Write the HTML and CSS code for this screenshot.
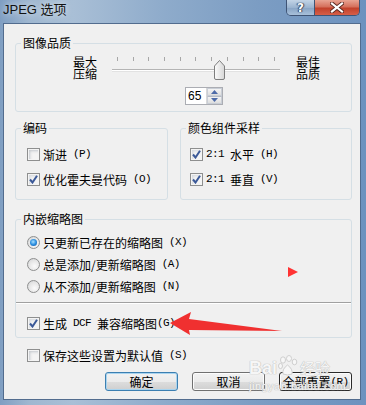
FILE: index.html
```html
<!DOCTYPE html>
<html lang="zh-CN">
<head>
  <meta charset="UTF-8">
  <title>JPEG 选项</title>
  <link rel="stylesheet" href="styles.css">
</head>
<body>
  <div class="window">

    <!-- title bar -->
    <div class="titlebar">
      <span class="title">JPEG 选项</span>
      <div class="caption-buttons">
        <span class="cap-btn help">?</span>
        <span class="cap-btn close">
          <svg width="14" height="11" viewBox="0 0 14 11">
            <path d="M2 1.5 L12 9.5 M12 1.5 L2 9.5" stroke="#5a2a22" stroke-width="4" stroke-linecap="square"/>
            <path d="M2 1.5 L12 9.5 M12 1.5 L2 9.5" stroke="#fff" stroke-width="2.2" stroke-linecap="square"/>
          </svg>
        </span>
      </div>
    </div>

    <div class="client">

      <!-- image quality -->
      <fieldset class="group quality">
        <legend>图像品质</legend>
        <div class="quality-row">
          <div class="end-label"><span>最大</span><span>压缩</span></div>
          <div class="slider">
            <div class="ticks">
              <i></i><i></i><i></i><i></i><i></i><i></i><i></i><i></i><i></i><i></i><i></i>
            </div>
            <div class="track"></div>
            <svg class="thumb" style="left: 102px" width="11" height="20" viewBox="0 0 11 20">
              <defs>
                <linearGradient id="thumbFill" x1="0" y1="0" x2="1" y2="0">
                  <stop offset="0" stop-color="#fbfbfb"/>
                  <stop offset="1" stop-color="#d6d6d6"/>
                </linearGradient>
              </defs>
              <path d="M0.5 6 L5.5 0.5 L10.5 6 V18 Q10.5 19.5 9 19.5 H2 Q0.5 19.5 0.5 18 Z" fill="url(#thumbFill)" stroke="#7d7d7d"/>
            </svg>
          </div>
          <div class="end-label"><span>最佳</span><span>品质</span></div>
        </div>
        <div class="spin-row">
          <div class="spinner">
            <span class="spin-value">65</span>
            <span class="spin-buttons">
              <span class="spin-btn"><svg width="7" height="4"><path d="M0 4 L3.5 0 L7 4 Z" fill="#4e6ba8"/></svg></span>
              <span class="spin-btn"><svg width="7" height="4"><path d="M0 0 L3.5 4 L7 0 Z" fill="#4e6ba8"/></svg></span>
            </span>
          </div>
        </div>
      </fieldset>

      <div class="mid-row">
        <!-- encoding -->
        <fieldset class="group encoding">
          <legend>编码</legend>
          <div class="options">
            <label class="option"><span class="check"></span>渐进<span class="lat"> (P)</span></label>
            <label class="option"><span class="check checked"><svg width="9" height="9" viewBox="0 0 9 9"><path d="M1 4.5 L3.5 7.5 L8 0.8" fill="none" stroke="#3b5998" stroke-width="2"/></svg></span>优化霍夫曼代码<span class="lat"> (O)</span></label>
          </div>
        </fieldset>

        <!-- colour sampling -->
        <fieldset class="group sampling">
          <legend>颜色组件采样</legend>
          <div class="options">
            <label class="option"><span class="check checked"><svg width="9" height="9" viewBox="0 0 9 9"><path d="M1 4.5 L3.5 7.5 L8 0.8" fill="none" stroke="#3b5998" stroke-width="2"/></svg></span><span class="lat">2:1 </span>水平<span class="lat"> (H)</span></label>
            <label class="option"><span class="check checked"><svg width="9" height="9" viewBox="0 0 9 9"><path d="M1 4.5 L3.5 7.5 L8 0.8" fill="none" stroke="#3b5998" stroke-width="2"/></svg></span><span class="lat">2:1 </span>垂直<span class="lat"> (V)</span></label>
          </div>
        </fieldset>
      </div>

      <!-- thumbnails -->
      <fieldset class="group thumbs">
        <legend>内嵌缩略图</legend>
        <div class="radios">
          <label class="option"><span class="radio selected"><i></i></span>只更新已存在的缩略图<span class="lat"> (X)</span></label>
          <label class="option"><span class="radio"></span>总是添加/更新缩略图<span class="lat"> (A)</span></label>
          <label class="option"><span class="radio"></span>从不添加/更新缩略图<span class="lat"> (N)</span></label>
        </div>
        <div class="separator"></div>
        <label class="option dcf"><span class="check checked"><svg width="9" height="9" viewBox="0 0 9 9"><path d="M1 4.5 L3.5 7.5 L8 0.8" fill="none" stroke="#3b5998" stroke-width="2"/></svg></span>生成<span class="lat"> DCF </span>兼容缩略图<span class="lat">(G)</span></label>
      </fieldset>

      <label class="option save"><span class="check"></span>保存这些设置为默认值<span class="lat"> (S)</span></label>

      <div class="buttons">
        <span class="btn default">确定</span>
        <span class="btn">取消</span>
        <span class="btn focused">全部重置<span class="lat">(R)</span></span>
      </div>
    </div>

    <!-- watermark -->
    <div class="watermark">
      <div class="wm-logo">
        <span class="wm-bai">Bai</span>
        <svg class="wm-paw" width="20" height="22" viewBox="0 0 20 22">
          <g fill="#f7f7f7" stroke="#cfcfcf">
            <ellipse cx="5" cy="5" rx="2.5" ry="3.2"/>
            <ellipse cx="11" cy="3.5" rx="2.5" ry="3"/>
            <ellipse cx="16.5" cy="7" rx="2.3" ry="2.8"/>
            <ellipse cx="2.5" cy="11" rx="2" ry="2.6"/>
            <path d="M5 19 Q4 14 9.5 10 Q15 14 14 19 Q9.5 21 5 19 Z"/>
          </g>
        </svg>
        <span class="wm-jy">经验</span>
      </div>
      <div class="wm-url">jingyan.baidu.com</div>
    </div>

    <!-- red annotations -->
    <svg class="marks" width="366" height="405" viewBox="0 0 366 405">
      <path d="M288 267 L298 272 L288 277 Z" fill="#ff3333"/>
      <path d="M170 323 L191 312 L189 319 L282 331 L189 330 L190 335 Z" fill="#f03030"/>
    </svg>
  </div>
</body>
</html>
```

FILE: styles.css
```css
/* Basic reset */
body {
    margin: 0;
    background: #ffffff;
    font-family: "Noto Sans CJK SC", sans-serif;
    font-size: 12px;
    color: #000;
}

/* Window frame */
.window {
    position: relative;
    width: 366px;
    height: 405px;
    box-sizing: border-box;
    padding: 0 5px 5px 3px;
    display: flex;
    flex-direction: column;
    background: linear-gradient(90deg, #7f9ec2 0%, #9fb7d0 8%, #a9bfd6 20%, #8eabcb 45%, #7c9dc3 70%, #6d92bf 100%);
    overflow: hidden;
}

.titlebar {
    height: 23px;
    display: flex;
    justify-content: space-between;
    align-items: flex-start;
    flex-shrink: 0;
}

.title {
    font-family: "Liberation Sans", "Noto Sans CJK SC", sans-serif;
    font-size: 13px;
    line-height: 16px;
    padding-top: 2px;
    color: #111;
    text-shadow: 0 0 6px rgba(255, 255, 255, 0.9);
}

.caption-buttons {
    display: flex;
    margin-right: 1px;
    border: 1px solid #3f5475;
    border-top: none;
    border-radius: 0 0 5px 5px;
    overflow: hidden;
}

.cap-btn {
    height: 15px;
    display: flex;
    align-items: center;
    justify-content: center;
}

.help {
    width: 27px;
    background: linear-gradient(#c3d4e6, #9bb4d0 50%, #87a3c4 51%, #a8c0da);
    border-right: 1px solid #3f5475;
    font-family: "DejaVu Sans", sans-serif;
    font-weight: bold;
    font-size: 12px;
    color: #fff;
    text-shadow: 0 0 1px #2d3e58, 1px 0 1px #2d3e58, -1px 0 1px #2d3e58;
}

.close {
    width: 44px;
    background: linear-gradient(#e8a493, #d5705c 45%, #c2412b 55%, #d65f48);
}

/* Client area */
.client {
    flex: 1;
    background: #f0f0f0;
    border: 1px solid #526c8e;
    padding: 0 8px 0 11px;
    display: flex;
    flex-direction: column;
}

/* Group boxes */
.group {
    margin: 0;
    padding: 0;
    border: 1px solid #d5dfe5;
    border-radius: 3px;
    min-width: 0;
}

.group legend {
    margin-left: 5px;
    padding: 0 2px;
    line-height: 14px;
}

.quality {
    margin-top: 12px;
    padding: 6px 0 6px 0;
}

.quality-row {
    display: flex;
    height: 24px;
    padding-left: 57px;
}

.end-label {
    width: 24px;
    display: flex;
    flex-direction: column;
    align-items: flex-end;
}

.end-label span {
    height: 12px;
    line-height: 12px;
    white-space: nowrap;
}

.slider {
    position: relative;
    width: 168px;
    height: 24px;
    margin: 0 16px 0 15px;
}

.ticks {
    display: flex;
    justify-content: space-between;
    padding: 1px 5px 0 5px;
}

.ticks i {
    width: 1px;
    height: 4px;
    background: #a7a7a7;
}

.track {
    margin-top: 8px;
    height: 1px;
    background: #b4b4b4;
    border-bottom: 1px solid #ffffff;
    box-shadow: 0 1px 0 #e2e2e2;
}

.thumb {
    position: absolute;
    top: 4px;
}

.spin-row {
    display: flex;
    margin-top: 7px;
    padding-left: 169px;
}

.spinner {
    display: flex;
    width: 38px;
    height: 18px;
    box-sizing: border-box;
    border: 1px solid #abadb3;
    background: #fff;
}

.spin-value {
    flex: 1;
    padding-left: 2px;
    font-family: "Liberation Sans", sans-serif;
    font-size: 12px;
    line-height: 16px;
}

.spin-buttons {
    width: 15px;
    display: flex;
    flex-direction: column;
    border-left: 1px solid #d8d8d8;
}

.spin-btn {
    flex: 1;
    display: flex;
    align-items: center;
    justify-content: center;
    background: linear-gradient(#f4f4f4, #dedede);
    border: 1px solid #c9ced6;
}

.spin-btn + .spin-btn {
    border-top: 1px solid #b6bcc6;
}

/* Encoding + sampling */
.mid-row {
    display: flex;
    gap: 12px;
    margin-top: 9px;
}

.encoding {
    width: 153px;
    box-sizing: border-box;
}

.sampling {
    flex: 1;
}

.options {
    display: flex;
    flex-direction: column;
    gap: 9px;
    padding: 11px 0 12px 11px;
}

.sampling .options {
    padding-left: 9px;
}

.option {
    display: flex;
    align-items: center;
    height: 16px;
    white-space: nowrap;
}

/* half-width latin runs, like the dialog's bitmap font */
.lat {
    font-family: "Liberation Mono", monospace;
    font-size: 11px;
    letter-spacing: -0.6px;
    white-space: pre;
}

/* Checkboxes and radios */
.check {
    width: 13px;
    height: 13px;
    box-sizing: border-box;
    margin-right: 3px;
    border: 1px solid #8e8f8f;
    background: #f4f4f4;
    display: flex;
    align-items: center;
    justify-content: center;
    flex-shrink: 0;
    box-shadow: inset 0 0 0 1px #f4f4f4, inset 2px 2px 3px #c2c6cc;
}

.check.checked {
    box-shadow: inset 0 0 0 1px #f4f4f4, inset 2px 2px 3px #d4d8de;
}

.radio {
    width: 13px;
    height: 13px;
    box-sizing: border-box;
    margin-right: 3px;
    border: 1px solid #8e8f8f;
    border-radius: 50%;
    background: radial-gradient(circle at 60% 65%, #fbfbfb 0%, #e4e4e4 60%, #c9ccd1 100%);
    display: flex;
    align-items: center;
    justify-content: center;
    flex-shrink: 0;
}

.radio.selected i {
    width: 7px;
    height: 7px;
    border-radius: 50%;
    background: radial-gradient(circle at 45% 40%, #a9e0ff 0%, #2b8fe0 50%, #0d4d9c 100%);
}

/* Thumbnails */
.thumbs {
    margin-top: 12px;
    padding: 8px 0 6px 0;
}

.radios {
    display: flex;
    flex-direction: column;
    gap: 6px;
    padding-left: 11px;
}

.separator {
    margin-top: 8px;
    height: 1px;
    background: #a0a0a0;
    border-bottom: 1px solid #ffffff;
}

.dcf {
    margin-top: 11px;
    padding-left: 11px;
}

.save {
    margin-top: 9px;
    padding-left: 12px;
}

/* Dialog buttons */
.buttons {
    display: flex;
    justify-content: flex-end;
    gap: 14px;
    margin-top: 9px;
}

.btn {
    width: 73px;
    height: 19px;
    box-sizing: border-box;
    border: 1px solid #707070;
    border-radius: 3px;
    background: linear-gradient(#f2f2f2 0%, #ebebeb 50%, #dddddd 51%, #cfcfcf 100%);
    box-shadow: inset 0 0 0 1px #fcfcfc;
    display: flex;
    align-items: center;
    justify-content: center;
    line-height: 16px;
    white-space: nowrap;
}

.btn.default {
    border-color: #3c7fb1;
    box-shadow: inset 0 0 0 1px #a9d4ef;
}

.btn.focused {
    border-color: #2b2b2b;
}

/* Watermark */
.watermark {
    position: absolute;
    left: 249px;
    top: 355px;
    color: #f6f6f6;
    text-shadow: 0 0 1px #b8b8b8, 0 0 1px #b8b8b8;
    pointer-events: none;
}

.wm-logo {
    display: flex;
    align-items: flex-end;
}

.wm-bai {
    font-family: "Liberation Sans", sans-serif;
    font-weight: bold;
    font-size: 18px;
    line-height: 18px;
}

.wm-paw {
    margin: 0 2px 0 1px;
}

.wm-jy {
    font-size: 15px;
    line-height: 18px;
}

.wm-url {
    font-family: "Liberation Sans", sans-serif;
    font-size: 11px;
    margin-top: 3px;
    letter-spacing: 0.5px;
}

/* Red annotations */
.marks {
    position: absolute;
    left: 0;
    top: 0;
    pointer-events: none;
}
```
